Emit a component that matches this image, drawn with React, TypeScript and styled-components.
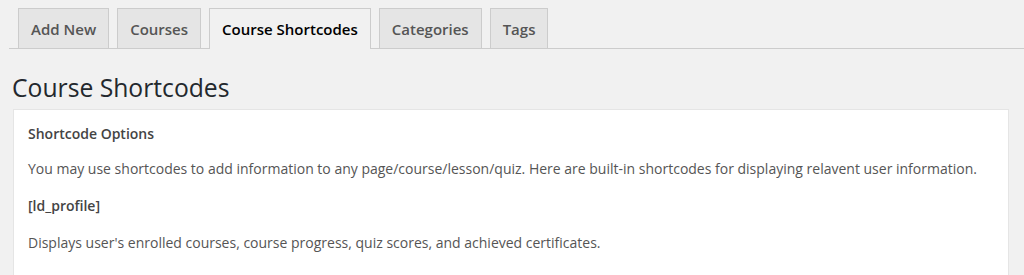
import React from 'react'
import styled, { createGlobalStyle } from 'styled-components'

const GlobalStyle = createGlobalStyle`
    html, body {
        margin: 0;
        background: #f1f1f1;
        font-family: "Open Sans", "Noto Sans", sans-serif;
    }
`

type TabProps = {
    active?: boolean
}

const Page = styled.div`
    padding-top: 8px;
    height: 275px;
    box-sizing: border-box;
    overflow: hidden;
`

const TabBar = styled.nav`
    display: flex;
    gap: 8px;
    margin-left: 9px;
    padding-left: 9px;
    border-bottom: 1px solid #cccccc;
    height: 40px;
`

const Tab = styled.a<TabProps>`
    display: flex;
    align-items: center;
    box-sizing: border-box;
    padding: 0 12px 0;
    border: 1px solid #cccccc;
    border-bottom: none;
    background: ${props => props.active ? '#f1f1f1' : '#e5e5e5'};
    color: ${props => props.active ? '#000000' : '#555555'};
    font-size: 15px;
    font-weight: 600;
    text-decoration: none;
    height: ${props => props.active ? '41px' : '40px'};
    cursor: pointer;
`

const Title = styled.h1`
    margin: 23px 0 0 12px;
    font-size: 24.7px;
    font-weight: 400;
    line-height: 32px;
    color: #23282d;
`

const Panel = styled.section`
    margin: 5px 15px 0 13px;
    background: #ffffff;
    border: 1px solid #e5e5e5;
    border-bottom: none;
    padding: 13px 14px 0;
    height: 200px;
`

const PanelHeading = styled.h3`
    margin: 0;
    font-size: 14px;
    font-weight: 600;
    line-height: 22px;
    color: #444444;
`

const Text = styled.p`
    margin: 15px 0 0;
    font-size: 14px;
    line-height: 22px;
    color: #555555;
`

const Intro = styled(Text)`
    margin-top: 13px;
`

const Code = styled(Text)`
    font-weight: 600;
    color: #444444;
`

const tabs = ['Add New', 'Courses', 'Course Shortcodes', 'Categories', 'Tags']

const App = () => (
    <Page>
        <GlobalStyle />
        <TabBar>
            {tabs.map(label => (
                <Tab key={label} active={label === 'Course Shortcodes'}>{label}</Tab>
            ))}
        </TabBar>
        <Title>Course Shortcodes</Title>
        <Panel>
            <PanelHeading>Shortcode Options</PanelHeading>
            <Intro>You may use shortcodes to add information to any page/course/lesson/quiz. Here are built-in shortcodes for displaying relavent user information.</Intro>
            <Code>[ld_profile]</Code>
            <Text>Displays user's enrolled courses, course progress, quiz scores, and achieved certificates.</Text>
        </Panel>
    </Page>
)

export default App
